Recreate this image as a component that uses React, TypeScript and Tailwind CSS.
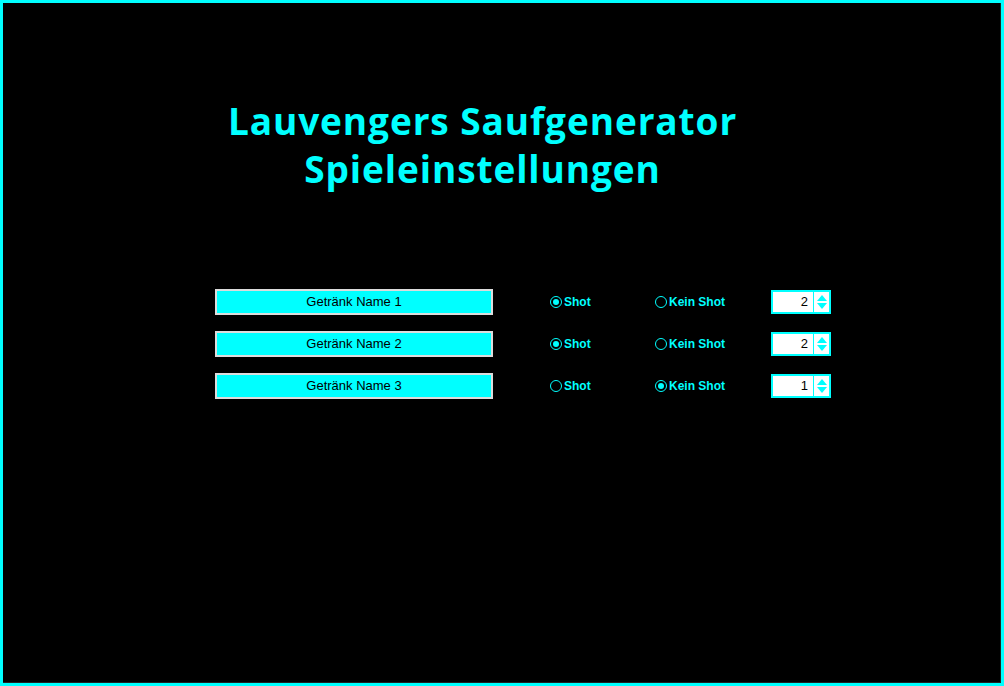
import React from "react";

type Row = {
  name: string;
  shot: boolean;
  count: number;
};

const rows: Row[] = [
  { name: "Getränk Name 1", shot: true, count: 2 },
  { name: "Getränk Name 2", shot: true, count: 2 },
  { name: "Getränk Name 3", shot: false, count: 1 },
];

function Radio({ checked, label }: { checked: boolean; label: string }) {
  return (
    <div className="flex items-center gap-[2px]">
      <span className="flex h-[12px] w-[12px] items-center justify-center rounded-full border border-[#00ffff]">
        {checked && <span className="h-[6px] w-[6px] rounded-full bg-[#00ffff]" />}
      </span>
      <span className="text-[12px] font-bold text-[#00ffff]">{label}</span>
    </div>
  );
}

function Spinner({ value }: { value: number }) {
  return (
    <div className="flex h-[24px] w-[60px] border-2 border-[#00ffff] bg-white">
      <div className="flex flex-1 items-center justify-end pr-[5px] text-[13px] text-black">{value}</div>
      <div className="flex w-[16px] flex-col items-center justify-center border-l border-[#00ffff]">
        <svg width="12" height="18" viewBox="0 0 12 18">
          <path d="M1 8 L6 2 L11 8 Z" fill="#00ffff" />
          <path d="M1 10 L6 16 L11 10 Z" fill="#00ffff" />
        </svg>
      </div>
    </div>
  );
}

export default function App() {
  return (
    <div
      className="h-[686px] w-[1004px] overflow-hidden border-[3px] border-[#00ffff] bg-black"
      style={{ fontFamily: "'Liberation Sans', Arial, sans-serif" }}
    >
      <div className="h-full w-full border-r border-b border-[#222]">
        <div
          className="pt-[94px] pr-[38px] text-center text-[37px] leading-[48px] font-bold tracking-[0.9px] text-[#00ffff]"
          style={{ fontFamily: "'Open Sans', 'Noto Sans', sans-serif" }}
        >
          <div>Lauvengers Saufgenerator</div>
          <div>Spieleinstellungen</div>
        </div>

        <div className="mt-[97px] flex flex-col gap-[18px] pl-[212px]">
          {rows.map((r) => (
            <div key={r.name} className="flex h-[24px] items-center">
              <div className="flex h-[26px] w-[278px] items-center justify-center border-2 border-[#dcdcdc] bg-[#00ffff] text-[13px] text-black">
                {r.name}
              </div>
              <div className="ml-[57px] w-[105px]">
                <Radio checked={r.shot} label="Shot" />
              </div>
              <div className="w-[116px]">
                <Radio checked={!r.shot} label="Kein Shot" />
              </div>
              <Spinner value={r.count} />
            </div>
          ))}
        </div>
      </div>
    </div>
  );
}
